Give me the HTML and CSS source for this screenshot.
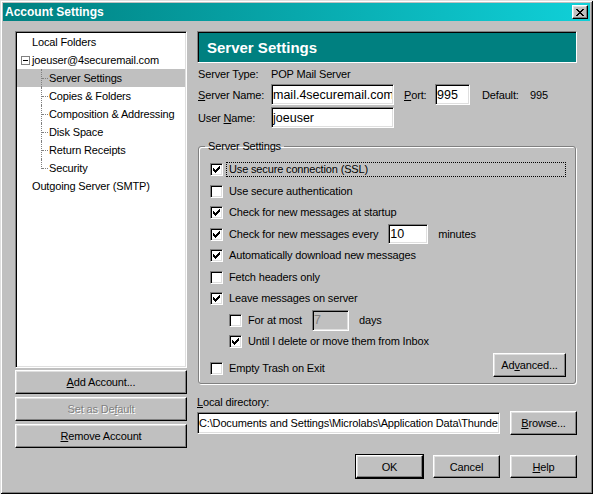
FILE: index.html
```html
<!DOCTYPE html>
<html lang="en">
<head>
  <meta charset="UTF-8">
  <title>Account Settings</title>
  <link rel="stylesheet" href="styles.css">
</head>
<body>
  <div class="window">
    <div class="titlebar">
      <span class="title">Account Settings</span>
      <div class="close">
        <svg width="8" height="7" viewBox="0 0 8 7" shape-rendering="crispEdges">
          <path d="M0 0h2v1h-2zM6 0h2v1h-2zM1 1h2v1h-2zM5 1h2v1h-2zM2 2h4v1h-4zM3 3h2v1h-2zM2 4h4v1h-4zM1 5h2v1h-2zM5 5h2v1h-2zM0 6h2v1h-2zM6 6h2v1h-2z" fill="#000"/>
        </svg>
      </div>
    </div>

    <div class="content">
      <!-- account tree + account buttons -->
      <div class="sidebar">
        <div class="tree">
          <div class="node"><span class="gutter"></span>Local Folders</div>
          <div class="node"><span class="gutter"><span class="toggle"></span></span>joeuser@4securemail.com</div>
          <div class="node child selected"><span class="branch"></span>Server Settings</div>
          <div class="node child"><span class="branch"></span>Copies &amp; Folders</div>
          <div class="node child"><span class="branch"></span>Composition &amp; Addressing</div>
          <div class="node child"><span class="branch"></span>Disk Space</div>
          <div class="node child"><span class="branch"></span>Return Receipts</div>
          <div class="node child last"><span class="branch"></span>Security</div>
          <div class="node"><span class="gutter"></span>Outgoing Server (SMTP)</div>
        </div>
        <button class="btn side-btn"><u>A</u>dd Account...</button>
        <button class="btn side-btn" disabled>Set as De<u>f</u>ault</button>
        <button class="btn side-btn"><u>R</u>emove Account</button>
      </div>

      <div class="main">
        <div class="panel-header">Server Settings</div>

        <div class="row info-row">
          <span class="lbl">Server Type:</span>
          <span>POP Mail Server</span>
        </div>
        <div class="row field-row">
          <span class="lbl"><u>S</u>erver Name:</span>
          <input class="textbox big name-box" type="text" value="mail.4securemail.com">
          <span class="lbl-port"><u>P</u>ort:</span>
          <input class="textbox big port-box" type="text" value="995">
          <span class="lbl-default">Default:</span>
          <span>995</span>
        </div>
        <div class="row field-row">
          <span class="lbl">User <u>N</u>ame:</span>
          <input class="textbox big name-box" type="text" value="joeuser">
        </div>

        <fieldset class="group">
          <legend>Server Settings</legend>
          <div class="check-row">
            <span class="check on"></span><span class="check-label focus">Use secure connection (SSL)</span>
          </div>
          <div class="check-row">
            <span class="check"></span><span class="check-label">Use secure authentication</span>
          </div>
          <div class="check-row">
            <span class="check on"></span><span class="check-label">Check for new messages at startup</span>
          </div>
          <div class="check-row">
            <span class="check on"></span><span class="check-label">Check for new messages every</span>
            <input class="textbox big minutes-box" type="text" value="10">
            <span class="unit">minutes</span>
          </div>
          <div class="check-row">
            <span class="check on"></span><span class="check-label">Automatically download new messages</span>
          </div>
          <div class="check-row">
            <span class="check"></span><span class="check-label">Fetch headers only</span>
          </div>
          <div class="check-row">
            <span class="check on"></span><span class="check-label">Leave messages on server</span>
          </div>
          <div class="check-row sub">
            <span class="check"></span><span class="check-label">For at most</span>
            <input class="textbox big days-box" type="text" value="7" disabled>
            <span class="unit">days</span>
          </div>
          <div class="check-row sub">
            <span class="check on"></span><span class="check-label">Until I delete or move them from Inbox</span>
          </div>
          <div class="last-row">
            <div class="check-row">
              <span class="check"></span><span class="check-label">Empty Trash on Exit</span>
            </div>
            <button class="btn advanced-btn">Ad<u>v</u>anced...</button>
          </div>
        </fieldset>

        <div class="dir-label"><u>L</u>ocal directory:</div>
        <div class="dir-row">
          <input class="textbox dir-box" type="text" value="C:\Documents and Settings\Microlabs\Application Data\Thunderbird\Profiles">
          <button class="btn browse-btn"><u>B</u>rowse...</button>
        </div>

        <div class="footer">
          <button class="btn default-btn">OK</button>
          <button class="btn">Cancel</button>
          <button class="btn"><u>H</u>elp</button>
        </div>
      </div>
    </div>
  </div>
</body>
</html>
```

FILE: styles.css
```css
* {
  box-sizing: border-box;
}
body {
  margin: 0;
  font-family: "Liberation Sans", Arial, sans-serif;
  font-size: 11px;
  letter-spacing: -0.15px;
  color: #000;
  background: #c0c0c0;
}
u {
  text-decoration: underline;
  text-underline-offset: 1px;
}
.window {
  width: 593px;
  height: 494px;
  padding: 3px;
  background: #c0c0c0;
  box-shadow: inset 1px 1px #dfdfdf, inset -1px -1px #000, inset 2px 2px #fff, inset -2px -2px #808080;
}
.titlebar {
  height: 18px;
  display: flex;
  align-items: center;
  justify-content: space-between;
  padding: 0 2px;
  background: linear-gradient(to right, #008080, #10d0d8);
  color: #fff;
}
.title {
  font-weight: bold;
  font-size: 12px;
  letter-spacing: 0;
}
.close {
  width: 16px;
  height: 14px;
  display: flex;
  align-items: center;
  justify-content: center;
  background: #c0c0c0;
  border: 1px solid;
  border-color: #fff #000 #000 #fff;
  box-shadow: inset -1px -1px #808080, inset 1px 1px #dfdfdf;
}
.content {
  display: flex;
  gap: 10px;
  padding: 10px 13px 0 12px;
}

/* tree */
.sidebar {
  width: 172px;
  display: flex;
  flex-direction: column;
}
.tree {
  height: 337px;
  padding: 1px;
  background: #fff;
  border: 1px solid;
  border-color: #808080 #fff #fff #808080;
  box-shadow: inset 1px 1px #000, inset -1px -1px #dfdfdf;
}
.node {
  height: 18px;
  display: flex;
  align-items: center;
  white-space: nowrap;
}
.node.selected {
  background: #c0c0c0;
}
.gutter {
  width: 15px;
  display: flex;
  align-items: center;
}
.toggle {
  position: relative;
  width: 9px;
  height: 9px;
  margin-left: 4px;
  border: 1px solid #808080;
  background: #fff;
}
.toggle::after {
  content: "";
  position: absolute;
  left: 1px;
  top: 3px;
  width: 5px;
  height: 1px;
  background: #000;
}
.branch {
  position: relative;
  width: 32px;
  align-self: stretch;
}
.branch::before {
  content: "";
  position: absolute;
  left: 24px;
  top: 0;
  bottom: 0;
  border-left: 1px dotted #808080;
}
.last .branch::before {
  bottom: 8px;
}
.branch::after {
  content: "";
  position: absolute;
  left: 25px;
  top: 9px;
  width: 6px;
  border-top: 1px dotted #808080;
}

/* buttons */
.btn {
  height: 24px;
  padding: 0;
  font-family: inherit;
  font-size: 11px;
  letter-spacing: -0.15px;
  color: #000;
  background: #c0c0c0;
  border: 1px solid;
  border-color: #fff #000 #000 #fff;
  box-shadow: inset -1px -1px #808080, inset 1px 1px #dfdfdf;
}
.btn:disabled {
  color: #808080;
  text-shadow: 1px 1px #fff;
}
.side-btn {
  margin-top: 3px;
}
.tree + .side-btn {
  margin-top: 2px;
}

/* right side */
.main {
  width: 380px;
  display: flex;
  flex-direction: column;
}
.panel-header {
  height: 32px;
  display: flex;
  align-items: center;
  padding-left: 9px;
  background: #008080;
  color: #fff;
  font-size: 15px;
  font-weight: bold;
  letter-spacing: 0;
  border: 1px solid;
  border-color: #808080 #fff #fff #808080;
  box-shadow: inset 1px 1px #000;
}
.row {
  display: flex;
  align-items: center;
  padding-left: 1px;
  white-space: nowrap;
}
.info-row {
  height: 16px;
  margin-top: 3px;
}
.field-row {
  height: 21px;
  margin-top: 2px;
}
.lbl {
  width: 73px;
  flex: none;
}
.lbl-port {
  width: 31px;
  margin-left: 10px;
}
.lbl-default {
  width: 48px;
  margin-left: 12px;
}
.textbox {
  height: 21px;
  margin: 0;
  padding: 0 1px;
  font-family: inherit;
  font-size: 11px;
  letter-spacing: -0.15px;
  color: #000;
  background: #fff;
  border: 1px solid;
  border-color: #808080 #fff #fff #808080;
  box-shadow: inset 1px 1px #000, inset -1px -1px #dfdfdf;
  outline: none;
}
.textbox.big {
  font-size: 12.5px;
  letter-spacing: 0;
}
.textbox:disabled {
  background: #c0c0c0;
  color: #808080;
}
.name-box {
  width: 123px;
}
.port-box {
  width: 35px;
}

/* group box */
.group {
  margin: 12px 1px 0;
  padding: 6px 9px 6px 11px;
  border: 1px solid #808080;
  border-radius: 3px;
  box-shadow: 1px 1px #fff, inset 1px 1px #fff;
}
.group legend {
  margin-left: -5px;
  padding: 0 3px;
  line-height: 13px;
}
.check-row {
  height: 21.5px;
  display: flex;
  align-items: center;
  white-space: nowrap;
}
.check-row.sub {
  padding-left: 19px;
}
.check {
  width: 13px;
  height: 13px;
  flex: none;
  display: flex;
  align-items: center;
  justify-content: center;
  background: #fff;
  border: 1px solid;
  border-color: #808080 #fff #fff #808080;
  box-shadow: inset 1px 1px #000, inset -1px -1px #dfdfdf;
}
.check.on::after {
  content: "";
  width: 7px;
  height: 7px;
  background: url("data:image/svg+xml,%3Csvg xmlns='http://www.w3.org/2000/svg' width='7' height='7' shape-rendering='crispEdges'%3E%3Cpath d='M0 2h1v3h-1zM1 3h1v3h-1zM2 4h1v3h-1zM3 3h1v3h-1zM4 2h1v3h-1zM5 1h1v3h-1zM6 0h1v3h-1z'/%3E%3C/svg%3E");
}
.check-label {
  margin-left: 3px;
  padding: 0 2px;
  line-height: 13px;
  border: 1px solid transparent;
}
.check-label.focus {
  flex: 1;
  border: 1px dotted #000;
}
.minutes-box {
  width: 40px;
  height: 20px;
  margin-left: 7px;
}
.days-box {
  width: 37px;
  margin-left: 7px;
}
.unit {
  margin-left: 10px;
}
.last-row {
  height: 24px;
  margin-top: 0.5px;
  display: flex;
  justify-content: space-between;
}
.last-row .check-row {
  height: 13px;
  align-self: flex-end;
  margin-bottom: 2px;
}
.advanced-btn {
  width: 73px;
}
.dir-label {
  margin-top: 12px;
  height: 13px;
  line-height: 13px;
}
.dir-row {
  display: flex;
  align-items: center;
  gap: 10px;
  margin-top: 2px;
}
.dir-box {
  width: 303px;
  height: 22px;
}
.browse-btn {
  width: 67px;
}
.footer {
  display: flex;
  justify-content: flex-end;
  gap: 10px;
  margin-top: 20px;
}
.footer .btn {
  width: 67px;
  height: 23px;
}
.default-btn {
  outline: 1px solid #000;
}
```
